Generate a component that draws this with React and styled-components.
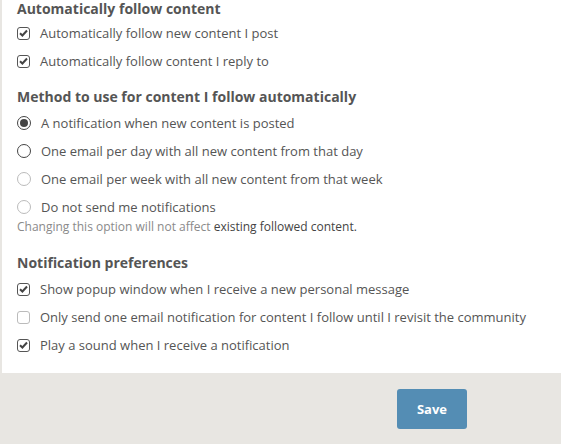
import React from "react";
import styled, { createGlobalStyle } from "styled-components";

const Global = createGlobalStyle`
  html, body { margin: 0; padding: 0; background: #e8e6e2; }
  body { font-family: "Open Sans", "Noto Sans", sans-serif; }
`;

const Page = styled.div`
  width: 561px;
  height: 444px;
  background: #e8e6e2;
  display: flex;
  flex-direction: column;
`;

const Panel = styled.div`
  margin-left: 2px;
  background: #fff;
  padding: 0 0 0 15px;
  height: 373px;
  box-sizing: border-box;
  overflow: hidden;
`;

const Heading = styled.h3`
  margin: ${p => p.$top}px 0 ${p => p.$bottom}px;
  font-size: 14px;
  font-weight: 700;
  color: #555;
  line-height: 18px;
`;

const Row = styled.label`
  display: flex;
  align-items: center;
  height: 28px;
  gap: 10px;
  font-size: 13px;
  color: #555;
`;

const Box = styled.span`
  width: 13px;
  height: 13px;
  box-sizing: border-box;
  border: 1px solid ${p => p.$checked ? "#555" : "#bbb"};
  border-radius: 3px;
  display: flex;
  align-items: center;
  justify-content: center;
  flex-shrink: 0;
`;

const Radio = styled.span`
  width: 14px;
  height: 14px;
  box-sizing: border-box;
  border: 1px solid ${p => p.$muted ? "#bbb" : "#444"};
  border-radius: 50%;
  display: flex;
  align-items: center;
  justify-content: center;
  flex-shrink: 0;
  &::after {
    content: "";
    display: ${p => p.$checked ? "block" : "none"};
    width: 8px;
    height: 8px;
    border-radius: 50%;
    background: #444;
  }
`;

const Hint = styled.div`
  font-size: 12px;
  color: #8a8a8a;
  margin-top: -2px;
  line-height: 16px;
  span { color: #444; }
`;

const Footer = styled.div`
  flex: 1;
  display: flex;
  justify-content: flex-end;
  align-items: flex-start;
  padding: 16px 94px 0 0;
`;

const SaveButton = styled.button`
  width: 70px;
  height: 40px;
  border: none;
  border-radius: 3px;
  background: #548db4;
  color: #fff;
  font-family: "Open Sans", sans-serif;
  font-weight: 700;
  font-size: 13px;
`;

const Check = () => (
  <svg width="9" height="8" viewBox="0 0 9 8">
    <path d="M1 4.2 L3.4 6.5 L8 1.5" fill="none" stroke="#444" strokeWidth="2" />
  </svg>
);

const CheckRow = ({ checked, children }) => (
  <Row>
    <Box $checked={checked}>{checked && <Check />}</Box>
    {children}
  </Row>
);

const RadioRow = ({ checked, muted, children }) => (
  <Row>
    <Radio $checked={checked} $muted={muted} />
    {children}
  </Row>
);

export default function App() {
  return (
    <Page>
      <Global />
      <Panel>
        <Heading $top={0} $bottom={1}>Automatically follow content</Heading>
        <CheckRow checked>Automatically follow new content I post</CheckRow>
        <CheckRow checked>Automatically follow content I reply to</CheckRow>
        <Heading $top={13} $bottom={3}>Method to use for content I follow automatically</Heading>
        <RadioRow checked>A notification when new content is posted</RadioRow>
        <RadioRow>One email per day with all new content from that day</RadioRow>
        <RadioRow muted>One email per week with all new content from that week</RadioRow>
        <RadioRow muted>Do not send me notifications</RadioRow>
        <Hint>Changing this option will not affect <span>existing followed content.</span></Hint>
        <Heading $top={19} $bottom={3}>Notification preferences</Heading>
        <CheckRow checked>Show popup window when I receive a new personal message</CheckRow>
        <CheckRow>Only send one email notification for content I follow until I revisit the community</CheckRow>
        <CheckRow checked>Play a sound when I receive a notification</CheckRow>
      </Panel>
      <Footer>
        <SaveButton>Save</SaveButton>
      </Footer>
    </Page>
  );
}
